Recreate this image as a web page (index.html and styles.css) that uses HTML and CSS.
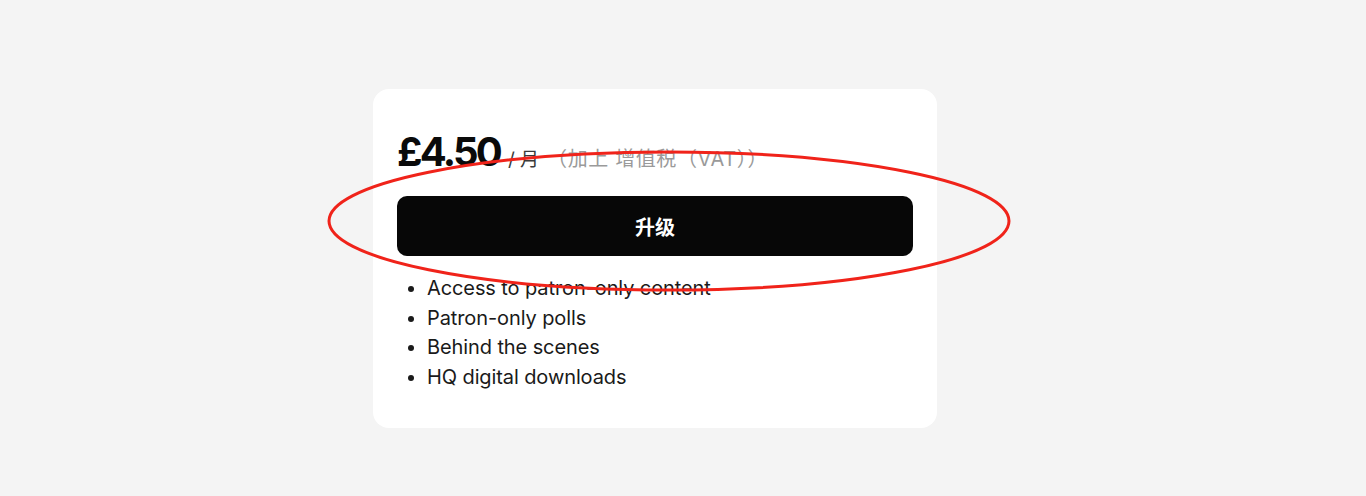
FILE: index.html
```html
<!DOCTYPE html>
<html lang="zh">
<head>
<meta charset="utf-8">
<link rel="stylesheet" href="styles.css">
</head>
<body>
<main class="page">
  <section class="card">
    <div class="price-row">
      <span class="price">£4.50</span>
      <span class="per">/ 月</span>
      <span class="vat">（加上 增值税（VAT））</span>
    </div>
    <button class="upgrade">升级</button>
    <ul class="benefits">
      <li>Access to patron-only content</li>
      <li>Patron-only polls</li>
      <li>Behind the scenes</li>
      <li>HQ digital downloads</li>
    </ul>
  </section>
</main>
<svg class="annotation" width="1366" height="496" viewBox="0 0 1366 496">
  <ellipse cx="669" cy="221" rx="340" ry="69" fill="none" stroke="#f0231a" stroke-width="3"/>
</svg>
</body>
</html>
```
FILE: styles.css
```css
html, body {
  margin: 0;
  padding: 0;
}
body {
  background: #f4f4f4;
  font-family: Inter, "Noto Sans CJK SC", sans-serif;
  color: #141414;
  width: 1366px;
  height: 496px;
  overflow: hidden;
  position: relative;
}
.page {
  padding: 89px 0 0 373px;
}
.card {
  width: 564px;
  height: 339px;
  box-sizing: border-box;
  background: #ffffff;
  border-radius: 16px;
  padding: 39px 24px 24px;
}
.price-row {
  display: flex;
  align-items: baseline;
  height: 48px;
  white-space: nowrap;
}
.price {
  font-size: 40px;
  font-weight: 700;
  letter-spacing: -2.8px;
  line-height: 48px;
  color: #0a0a0a;
  margin-right: 8px;
}
.per {
  font-size: 19px;
  color: #3a3a3a;
}
.vat {
  font-size: 20px;
  color: #9a9a9a;
  margin-left: 8px;
  letter-spacing: 0.6px;
}
.upgrade {
  display: block;
  width: 100%;
  height: 60px;
  margin-top: 20px;
  border: none;
  border-radius: 10px;
  background: #070707;
  color: #fff;
  font-family: Inter, "Noto Sans CJK SC", sans-serif;
  font-size: 20px;
  font-weight: 700;
  padding: 0;
}
.benefits {
  margin: 18px 0 0;
  padding-left: 30px;
  font-size: 20px;
  letter-spacing: -0.1px;
  line-height: 29.7px;
  color: #1a1a1a;
}
.annotation {
  position: absolute;
  left: 0;
  top: 0;
  pointer-events: none;
}
```
